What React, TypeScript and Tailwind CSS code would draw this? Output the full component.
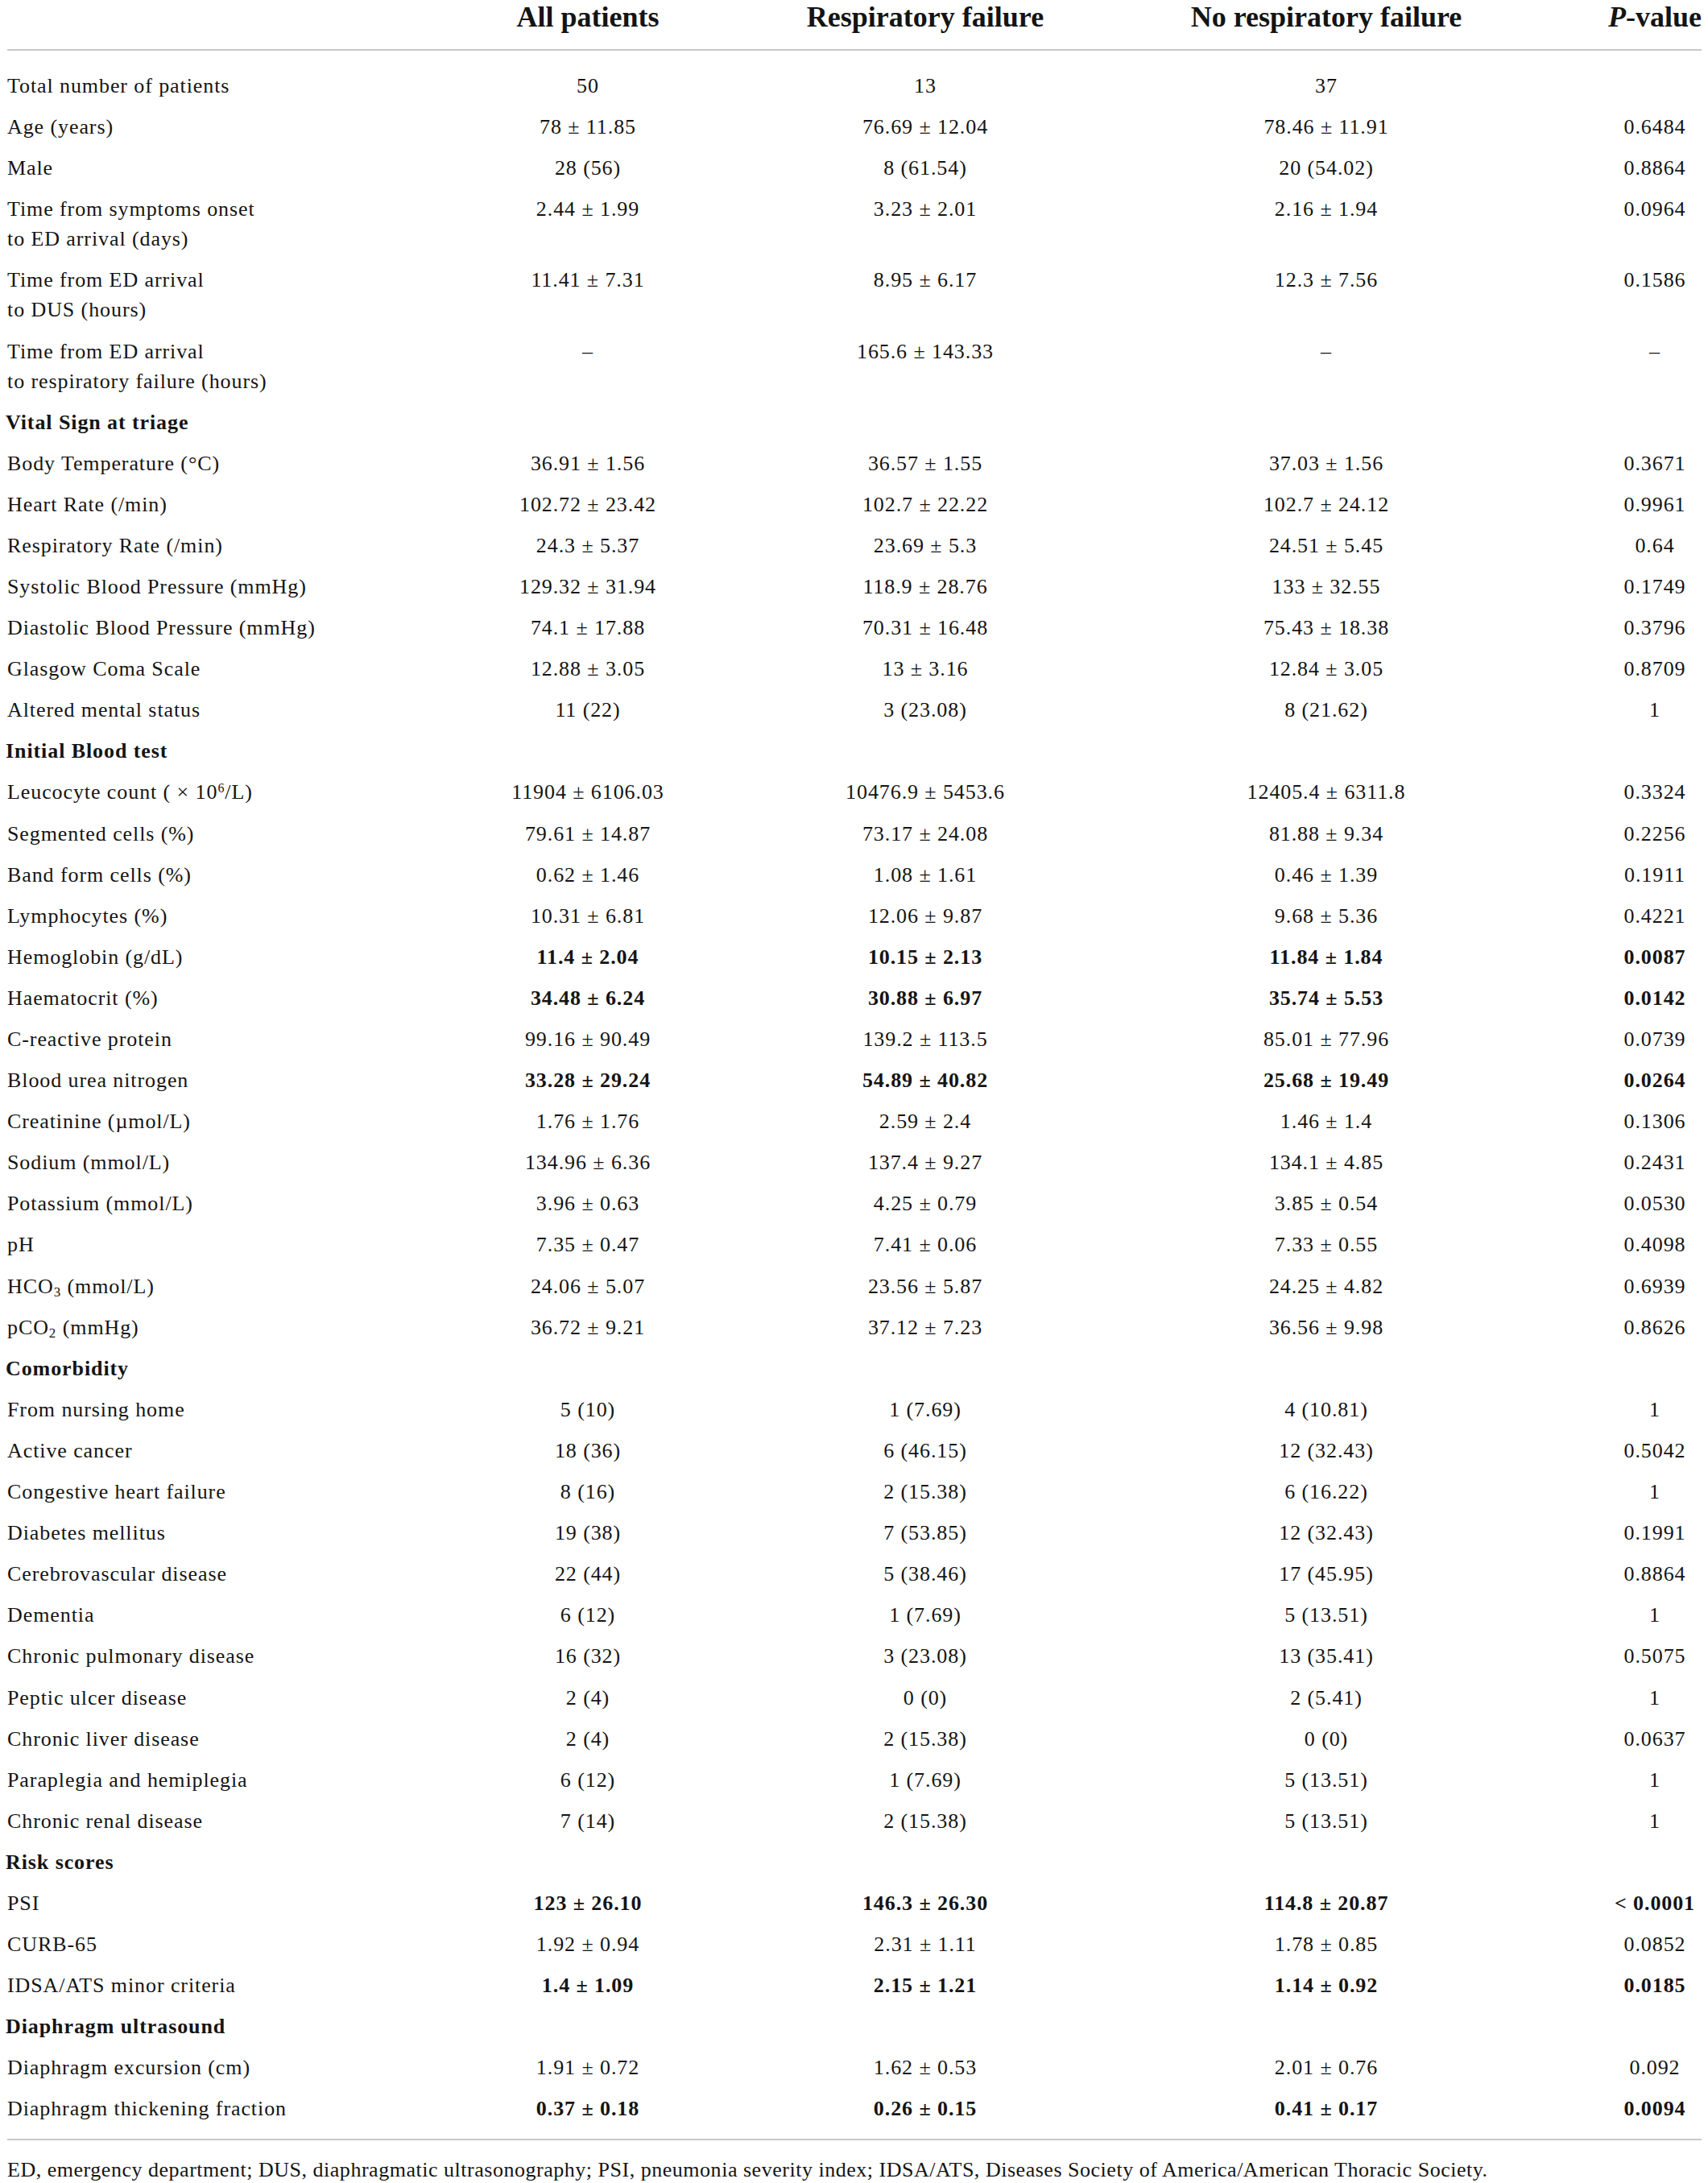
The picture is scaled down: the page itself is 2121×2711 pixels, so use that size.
import type { ReactNode } from 'react';

type Row =
  | { kind: 'section'; label: string }
  | { kind: 'data'; label: ReactNode; values: string[]; bold?: boolean };

const PM = '\u00b1';

const ROWS: Row[] = [
  { kind: 'data', label: 'Total number of patients', values: ['50', '13', '37', ''] },
  { kind: 'data', label: 'Age (years)', values: [`78 ${PM} 11.85`, `76.69 ${PM} 12.04`, `78.46 ${PM} 11.91`, '0.6484'] },
  { kind: 'data', label: 'Male', values: ['28 (56)', '8 (61.54)', '20 (54.02)', '0.8864'] },
  {
    kind: 'data',
    label: (
      <>
        Time from symptoms onset
        <br />
        to ED arrival (days)
      </>
    ),
    values: [`2.44 ${PM} 1.99`, `3.23 ${PM} 2.01`, `2.16 ${PM} 1.94`, '0.0964'],
  },
  {
    kind: 'data',
    label: (
      <>
        Time from ED arrival
        <br />
        to DUS (hours)
      </>
    ),
    values: [`11.41 ${PM} 7.31`, `8.95 ${PM} 6.17`, `12.3 ${PM} 7.56`, '0.1586'],
  },
  {
    kind: 'data',
    label: (
      <>
        Time from ED arrival
        <br />
        to respiratory failure (hours)
      </>
    ),
    values: ['\u2013', `165.6 ${PM} 143.33`, '\u2013', '\u2013'],
  },
  { kind: 'section', label: 'Vital Sign at triage' },
  {
    kind: 'data',
    label: <>Body Temperature ({'\u00b0'}C)</>,
    values: [`36.91 ${PM} 1.56`, `36.57 ${PM} 1.55`, `37.03 ${PM} 1.56`, '0.3671'],
  },
  { kind: 'data', label: 'Heart Rate (/min)', values: [`102.72 ${PM} 23.42`, `102.7 ${PM} 22.22`, `102.7 ${PM} 24.12`, '0.9961'] },
  { kind: 'data', label: 'Respiratory Rate (/min)', values: [`24.3 ${PM} 5.37`, `23.69 ${PM} 5.3`, `24.51 ${PM} 5.45`, '0.64'] },
  { kind: 'data', label: 'Systolic Blood Pressure (mmHg)', values: [`129.32 ${PM} 31.94`, `118.9 ${PM} 28.76`, `133 ${PM} 32.55`, '0.1749'] },
  { kind: 'data', label: 'Diastolic Blood Pressure (mmHg)', values: [`74.1 ${PM} 17.88`, `70.31 ${PM} 16.48`, `75.43 ${PM} 18.38`, '0.3796'] },
  { kind: 'data', label: 'Glasgow Coma Scale', values: [`12.88 ${PM} 3.05`, `13 ${PM} 3.16`, `12.84 ${PM} 3.05`, '0.8709'] },
  { kind: 'data', label: 'Altered mental status', values: ['11 (22)', '3 (23.08)', '8 (21.62)', '1'] },
  { kind: 'section', label: 'Initial Blood test' },
  {
    kind: 'data',
    label: (
      <>
        Leucocyte count ( {'\u00d7'} 10<sup className="text-[16px]">6</sup>/L)
      </>
    ),
    values: [`11904 ${PM} 6106.03`, `10476.9 ${PM} 5453.6`, `12405.4 ${PM} 6311.8`, '0.3324'],
  },
  { kind: 'data', label: 'Segmented cells (%)', values: [`79.61 ${PM} 14.87`, `73.17 ${PM} 24.08`, `81.88 ${PM} 9.34`, '0.2256'] },
  { kind: 'data', label: 'Band form cells (%)', values: [`0.62 ${PM} 1.46`, `1.08 ${PM} 1.61`, `0.46 ${PM} 1.39`, '0.1911'] },
  { kind: 'data', label: 'Lymphocytes (%)', values: [`10.31 ${PM} 6.81`, `12.06 ${PM} 9.87`, `9.68 ${PM} 5.36`, '0.4221'] },
  { kind: 'data', label: 'Hemoglobin (g/dL)', values: [`11.4 ${PM} 2.04`, `10.15 ${PM} 2.13`, `11.84 ${PM} 1.84`, '0.0087'], bold: true },
  { kind: 'data', label: 'Haematocrit (%)', values: [`34.48 ${PM} 6.24`, `30.88 ${PM} 6.97`, `35.74 ${PM} 5.53`, '0.0142'], bold: true },
  { kind: 'data', label: 'C-reactive protein', values: [`99.16 ${PM} 90.49`, `139.2 ${PM} 113.5`, `85.01 ${PM} 77.96`, '0.0739'] },
  { kind: 'data', label: 'Blood urea nitrogen', values: [`33.28 ${PM} 29.24`, `54.89 ${PM} 40.82`, `25.68 ${PM} 19.49`, '0.0264'], bold: true },
  { kind: 'data', label: <>Creatinine ({'\u00b5'}mol/L)</>, values: [`1.76 ${PM} 1.76`, `2.59 ${PM} 2.4`, `1.46 ${PM} 1.4`, '0.1306'] },
  { kind: 'data', label: 'Sodium (mmol/L)', values: [`134.96 ${PM} 6.36`, `137.4 ${PM} 9.27`, `134.1 ${PM} 4.85`, '0.2431'] },
  { kind: 'data', label: 'Potassium (mmol/L)', values: [`3.96 ${PM} 0.63`, `4.25 ${PM} 0.79`, `3.85 ${PM} 0.54`, '0.0530'] },
  { kind: 'data', label: 'pH', values: [`7.35 ${PM} 0.47`, `7.41 ${PM} 0.06`, `7.33 ${PM} 0.55`, '0.4098'] },
  {
    kind: 'data',
    label: (
      <>
        HCO<sub className="text-[17px]">3</sub> (mmol/L)
      </>
    ),
    values: [`24.06 ${PM} 5.07`, `23.56 ${PM} 5.87`, `24.25 ${PM} 4.82`, '0.6939'],
  },
  {
    kind: 'data',
    label: (
      <>
        pCO<sub className="text-[17px]">2</sub> (mmHg)
      </>
    ),
    values: [`36.72 ${PM} 9.21`, `37.12 ${PM} 7.23`, `36.56 ${PM} 9.98`, '0.8626'],
  },
  { kind: 'section', label: 'Comorbidity' },
  { kind: 'data', label: 'From nursing home', values: ['5 (10)', '1 (7.69)', '4 (10.81)', '1'] },
  { kind: 'data', label: 'Active cancer', values: ['18 (36)', '6 (46.15)', '12 (32.43)', '0.5042'] },
  { kind: 'data', label: 'Congestive heart failure', values: ['8 (16)', '2 (15.38)', '6 (16.22)', '1'] },
  { kind: 'data', label: 'Diabetes mellitus', values: ['19 (38)', '7 (53.85)', '12 (32.43)', '0.1991'] },
  { kind: 'data', label: 'Cerebrovascular disease', values: ['22 (44)', '5 (38.46)', '17 (45.95)', '0.8864'] },
  { kind: 'data', label: 'Dementia', values: ['6 (12)', '1 (7.69)', '5 (13.51)', '1'] },
  { kind: 'data', label: 'Chronic pulmonary disease', values: ['16 (32)', '3 (23.08)', '13 (35.41)', '0.5075'] },
  { kind: 'data', label: 'Peptic ulcer disease', values: ['2 (4)', '0 (0)', '2 (5.41)', '1'] },
  { kind: 'data', label: 'Chronic liver disease', values: ['2 (4)', '2 (15.38)', '0 (0)', '0.0637'] },
  { kind: 'data', label: 'Paraplegia and hemiplegia', values: ['6 (12)', '1 (7.69)', '5 (13.51)', '1'] },
  { kind: 'data', label: 'Chronic renal disease', values: ['7 (14)', '2 (15.38)', '5 (13.51)', '1'] },
  { kind: 'section', label: 'Risk scores' },
  { kind: 'data', label: 'PSI', values: [`123 ${PM} 26.10`, `146.3 ${PM} 26.30`, `114.8 ${PM} 20.87`, '< 0.0001'], bold: true },
  { kind: 'data', label: 'CURB-65', values: [`1.92 ${PM} 0.94`, `2.31 ${PM} 1.11`, `1.78 ${PM} 0.85`, '0.0852'] },
  { kind: 'data', label: 'IDSA/ATS minor criteria', values: [`1.4 ${PM} 1.09`, `2.15 ${PM} 1.21`, `1.14 ${PM} 0.92`, '0.0185'], bold: true },
  { kind: 'section', label: 'Diaphragm ultrasound' },
  { kind: 'data', label: 'Diaphragm excursion (cm)', values: [`1.91 ${PM} 0.72`, `1.62 ${PM} 0.53`, `2.01 ${PM} 0.76`, '0.092'] },
  { kind: 'data', label: 'Diaphragm thickening fraction', values: [`0.37 ${PM} 0.18`, `0.26 ${PM} 0.15`, `0.41 ${PM} 0.17`, '0.0094'], bold: true },
];

const GRID = 'grid grid-cols-[511px_420px_418px_578px_177px]';

function TableRow({ row }: { row: Row }) {
  if (row.kind === 'section') {
    return (
      <div className={`${GRID} py-[7.05px] leading-[37px]`}>
        <div className="-ml-[2px] font-bold">{row.label}</div>
      </div>
    );
  }
  return (
    <div className={`${GRID} py-[7.05px] leading-[37px]`}>
      <div className="whitespace-nowrap">{row.label}</div>
      {row.values.map((v, i) => (
        <div
          key={i}
          className={`text-center whitespace-nowrap ${i === 3 ? 'pl-[61px]' : ''} ${row.bold ? 'font-bold' : ''}`}
        >
          {v}
        </div>
      ))}
    </div>
  );
}

export default function App() {
  return (
    <div
      className="min-h-screen bg-white text-[#141414] text-[26px] tracking-[0.035em]"
      style={{ fontFamily: '"Liberation Serif", "Times New Roman", serif' }}
    >
      <div className="ml-[9px] w-[2104px]">
        {/* Column headings */}
        <div className={`${GRID} h-[61px] text-[36px] font-bold leading-[42px] tracking-normal`}>
          <div />
          <div className="text-center">All patients</div>
          <div className="text-center">Respiratory failure</div>
          <div className="text-center">No respiratory failure</div>
          <div className="pl-[61px] text-center">
            <span className="italic">P</span>-value
          </div>
        </div>

        <div className="border-y-2 border-[#c8c8c8] pt-[18px] pb-[11px]">
          {ROWS.map((row, i) => (
            <TableRow key={i} row={row} />
          ))}
        </div>

        <p className="pt-[18px] leading-[37px] tracking-[0.02em]">
          ED, emergency department; DUS, diaphragmatic ultrasonography; PSI, pneumonia severity index; IDSA/ATS,
          Diseases Society of America/American Thoracic Society.
        </p>
      </div>
    </div>
  );
}
